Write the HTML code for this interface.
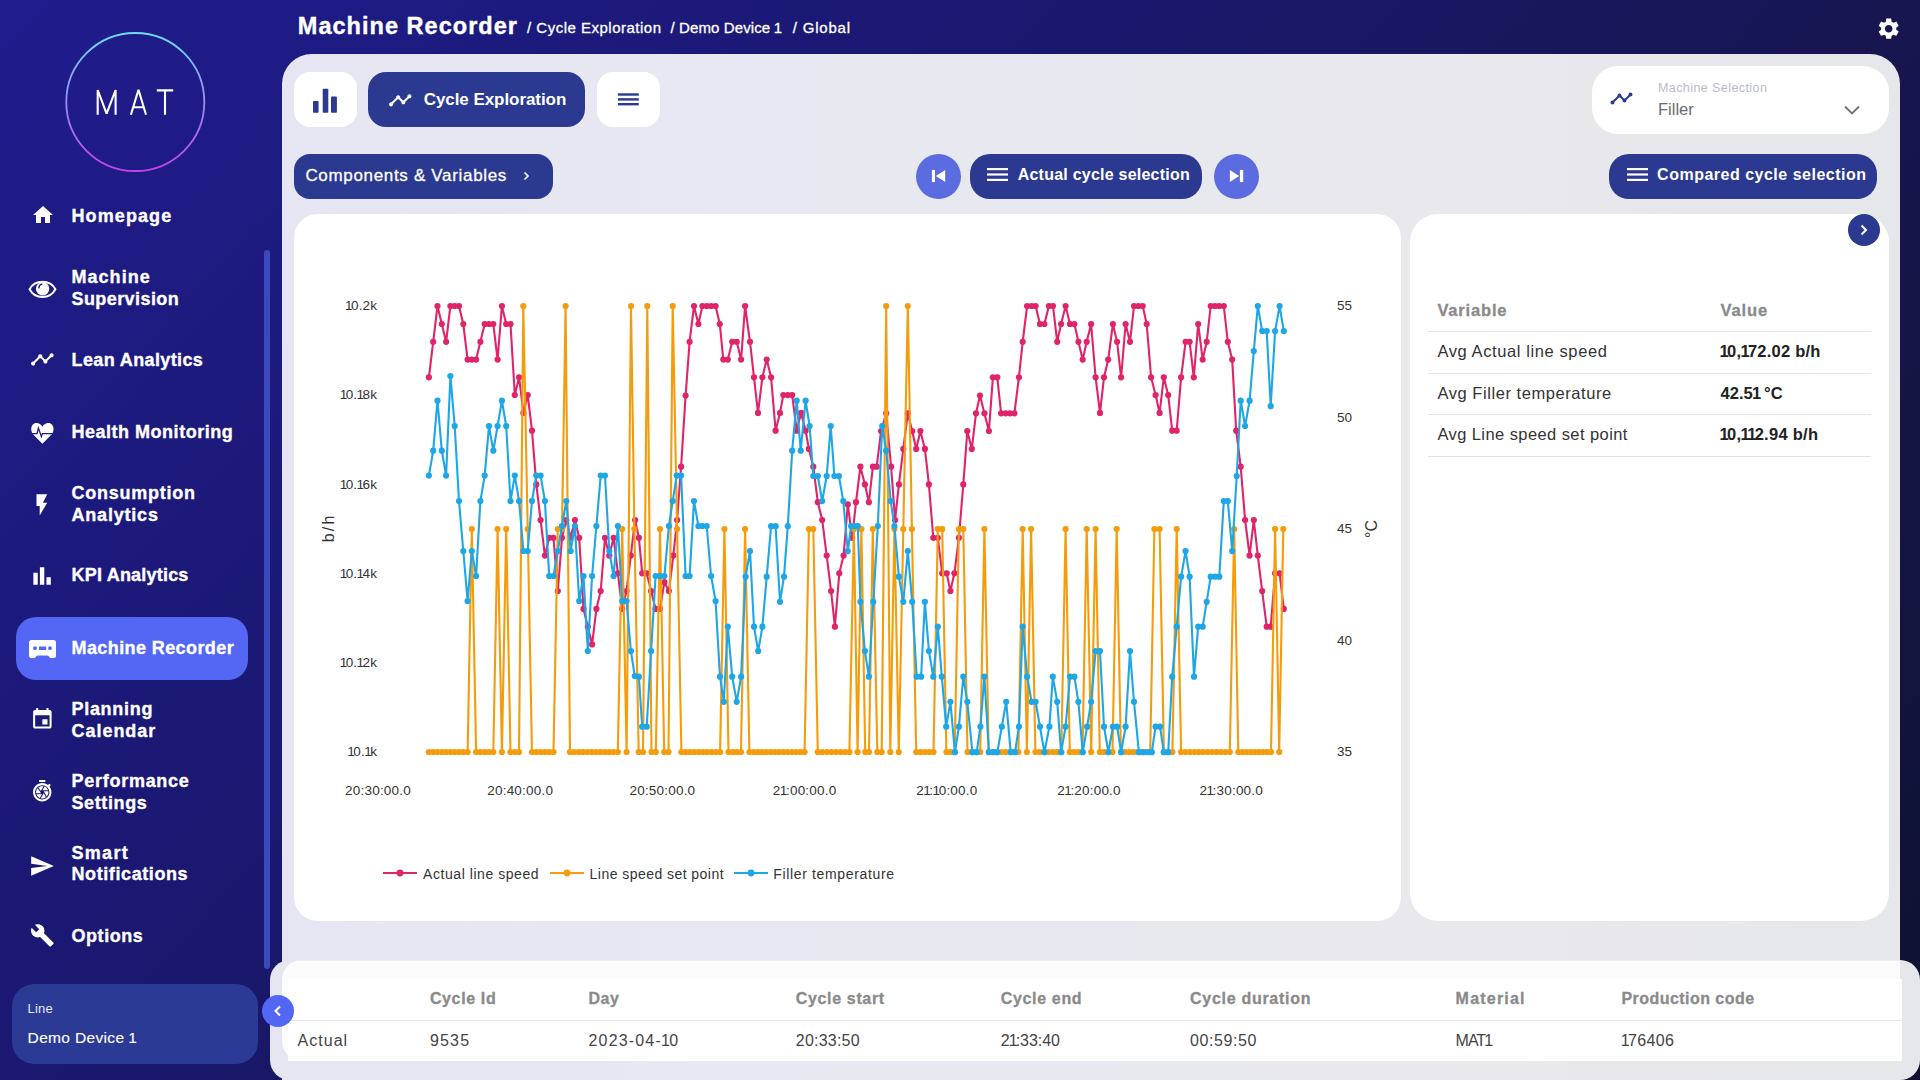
<!DOCTYPE html>
<html><head><meta charset="utf-8"><title>Machine Recorder</title>
<style>
html,body{margin:0;padding:0;}
body{width:1920px;height:1080px;overflow:hidden;position:relative;font-family:"Liberation Sans", sans-serif;
background:linear-gradient(133deg,#201c8e 0%,#1a1870 35%,#171650 66%,#0e1230 100%);}
.t{position:absolute;white-space:nowrap;font-family:"Liberation Sans", sans-serif;}
svg{overflow:visible}
</style></head><body>
<svg style="position:absolute;left:65px;top:32px;" width="140" height="140" viewBox="0 0 140 140"><defs><linearGradient id="lg" x1="0" y1="0" x2="0" y2="1">
<stop offset="0" stop-color="#6fdcf8"/><stop offset="0.5" stop-color="#9c8ef4"/><stop offset="1" stop-color="#c63ff0"/></linearGradient></defs>
<circle cx="70.3" cy="70" r="69" fill="none" stroke="url(#lg)" stroke-width="1.8"/>
<g fill="none" stroke="#fff" stroke-width="2.1" stroke-linejoin="bevel">
<path d="M32.7,82.8 V58 L41.6,81.6 L50.6,58 V82.8"/>
<path d="M65.9,82.8 L73.5,57.8 L81,82.8 M68.3,75.3 H78.6"/>
<path d="M91.8,58.4 H108.2 M100,58.4 V82.8"/>
</g></svg>
<div style="position:absolute;left:16px;top:617px;width:232px;height:63px;background:#5467f4;border-radius:20px;"></div>
<div class="t" style="left:71.5px;top:207.20px;font-size:18px;line-height:18px;color:#fff;font-weight:700;letter-spacing:1.1px;-webkit-text-stroke:0.35px #fff">Homepage</div>
<div class="t" style="left:71.5px;top:267.50px;font-size:18px;line-height:18px;color:#fff;font-weight:700;letter-spacing:1.033px;-webkit-text-stroke:0.35px #fff">Machine</div>
<div class="t" style="left:71.5px;top:289.50px;font-size:18px;line-height:18px;color:#fff;font-weight:700;letter-spacing:0.42px;-webkit-text-stroke:0.35px #fff">Supervision</div>
<div class="t" style="left:71.5px;top:350.80px;font-size:18px;line-height:18px;color:#fff;font-weight:700;letter-spacing:0.385px;-webkit-text-stroke:0.35px #fff">Lean Analytics</div>
<div class="t" style="left:71.5px;top:422.60px;font-size:18px;line-height:18px;color:#fff;font-weight:700;letter-spacing:0.512px;-webkit-text-stroke:0.35px #fff">Health Monitoring</div>
<div class="t" style="left:71.5px;top:483.50px;font-size:18px;line-height:18px;color:#fff;font-weight:700;letter-spacing:0.76px;-webkit-text-stroke:0.35px #fff">Consumption</div>
<div class="t" style="left:71.5px;top:505.50px;font-size:18px;line-height:18px;color:#fff;font-weight:700;letter-spacing:0.8px;-webkit-text-stroke:0.35px #fff">Analytics</div>
<div class="t" style="left:71.5px;top:566.40px;font-size:18px;line-height:18px;color:#fff;font-weight:700;letter-spacing:0.208px;-webkit-text-stroke:0.35px #fff">KPI Analytics</div>
<div class="t" style="left:71.5px;top:638.70px;font-size:18px;line-height:18px;color:#fff;font-weight:700;letter-spacing:0.407px;-webkit-text-stroke:0.35px #fff">Machine Recorder</div>
<div class="t" style="left:71.5px;top:699.70px;font-size:18px;line-height:18px;color:#fff;font-weight:700;letter-spacing:0.7px;-webkit-text-stroke:0.35px #fff">Planning</div>
<div class="t" style="left:71.5px;top:721.50px;font-size:18px;line-height:18px;color:#fff;font-weight:700;letter-spacing:0.971px;-webkit-text-stroke:0.35px #fff">Calendar</div>
<div class="t" style="left:71.5px;top:771.60px;font-size:18px;line-height:18px;color:#fff;font-weight:700;letter-spacing:0.73px;-webkit-text-stroke:0.35px #fff">Performance</div>
<div class="t" style="left:71.5px;top:793.60px;font-size:18px;line-height:18px;color:#fff;font-weight:700;letter-spacing:0.614px;-webkit-text-stroke:0.35px #fff">Settings</div>
<div class="t" style="left:71.5px;top:843.60px;font-size:18px;line-height:18px;color:#fff;font-weight:700;letter-spacing:1.3px;-webkit-text-stroke:0.35px #fff">Smart</div>
<div class="t" style="left:71.5px;top:865.30px;font-size:18px;line-height:18px;color:#fff;font-weight:700;letter-spacing:0.592px;-webkit-text-stroke:0.35px #fff">Notifications</div>
<div class="t" style="left:71.5px;top:926.70px;font-size:18px;line-height:18px;color:#fff;font-weight:700;letter-spacing:0.55px;-webkit-text-stroke:0.35px #fff">Options</div>
<svg style="position:absolute;left:30.6px;top:203.2px;" width="24" height="24" viewBox="0 0 24 24"><path fill="#fff" d="M10 20v-6h4v6h5v-8h3L12 3 2 12h3v8z"/></svg>
<svg style="position:absolute;left:28px;top:279px;" width="29" height="21" viewBox="0 0 29 21"><path d="M1.6,10.2 C5,3.6 9.5,2.7 14.5,2.7 C19.5,2.7 24,3.6 27.4,10.2 C24,16.8 19.5,18 14.5,18 C9.5,18 5,16.8 1.6,10.2 Z" fill="none" stroke="#fff" stroke-width="2"/>
<circle cx="14.6" cy="9.8" r="6.7" fill="#fff"/><path d="M10.9,8.9 C10.9,6.9 12.1,5.6 13.9,5.2" fill="none" stroke="#1e1b8a" stroke-width="1.3" stroke-linecap="round"/></svg>
<svg style="position:absolute;left:30.3px;top:346.8px;" width="24.7" height="24.7" viewBox="0 0 24 24"><path fill="#fff" d="M23 8c0 1.1-.9 2-2 2-.18 0-.35-.02-.51-.07l-3.56 3.55c.05.16.07.34.07.52 0 1.1-.9 2-2 2s-2-.9-2-2c0-.18.02-.36.07-.52l-2.55-2.55c-.16.05-.34.07-.52.07s-.36-.02-.52-.07l-4.55 4.56c.05.16.07.33.07.51 0 1.1-.9 2-2 2s-2-.9-2-2 .9-2 2-2c.18 0 .35.02.51.07l4.56-4.55C8.02 9.36 8 9.18 8 9c0-1.1.9-2 2-2s2 .9 2 2c0 .18-.02.36-.07.52l2.55 2.55c.16-.05.34-.07.52-.07s.36.02.52.07l3.55-3.56C19.02 8.35 19 8.18 19 8c0-1.1.9-2 2-2s2 .9 2 2z"/></svg>
<svg style="position:absolute;left:31px;top:422px;" width="24" height="23" viewBox="0 0 24 23"><path fill="#fff" d="M11.4,4.7 C9.8,1.6 6.9,0.6 4.6,1.1 C1.6,1.8 0,4.6 0.3,7.8 C0.45,9.6 1.1,11 1.7,11.9 L11.4,21.8 L21.1,11.9 C21.7,11 22.35,9.6 22.5,7.8 C22.8,4.6 21.2,1.8 18.2,1.1 C15.9,0.6 13,1.6 11.4,4.7 Z"/>
<path fill="none" stroke="#1e1b86" stroke-width="1.25" stroke-linejoin="miter" d="M-1,11.6 H6 L7.4,6 L10.4,14.6 L11.4,11.6 H24"/></svg>
<svg style="position:absolute;left:29.3px;top:491.7px;" width="25.7" height="25.7" viewBox="0 0 24 24"><path fill="#fff" d="M7 2v11h3v9l7-12h-4l4-8z"/></svg>
<svg style="position:absolute;left:29.1px;top:562.9px;" width="26.2" height="26.2" viewBox="0 0 24 24"><path fill="#fff" d="M4 9h4v11H4zm12 4h4v7h-4zm-6-9h4v16h-4z"/></svg>
<svg style="position:absolute;left:29px;top:640px;" width="27" height="18" viewBox="0 0 27 18"><path fill="#fff" fill-rule="evenodd" d="M2.5,0 H24.5 Q27,0 27,2.5 V15.5 Q27,18 24.5,18 H22 Q20.6,18 20,16.5 Q19.5,15.4 18,15.4 H9 Q7.5,15.4 7,16.5 Q6.4,18 5,18 H2.5 Q0,18 0,15.5 V2.5 Q0,0 2.5,0 Z
M6,6.3 A1.9,1.9 0 1 0 6,10.1 A1.9,1.9 0 1 0 6,6.3 Z M10,6.5 H17.2 V10 H10 Z M21,6.3 A1.9,1.9 0 1 0 21,10.1 A1.9,1.9 0 1 0 21,6.3 Z"/></svg>
<svg style="position:absolute;left:30px;top:706.8px;" width="24.7" height="24.7" viewBox="0 0 24 24"><path fill="#fff" d="M17 12h-5v5h5v-5zM16 1v2H8V1H6v2H5c-1.11 0-1.99.9-1.99 2L3 19c0 1.1.89 2 2 2h14c1.1 0 2-.9 2-2V5c0-1.1-.9-2-2-2h-1V1h-2zm3 18H5V8h14v11z"/></svg>
<svg style="position:absolute;left:30px;top:778.8px;" width="24.5" height="24.5" viewBox="0 0 24 24"><path fill="#fff" d="M15 1H9v2h6V1zm4.03 6.39l1.42-1.42c-.43-.51-.9-.99-1.41-1.41l-1.42 1.42C16.07 4.74 14.12 4 12 4c-4.97 0-9 4.03-9 9s4.02 9 9 9 9-4.03 9-9c0-2.12-.74-4.07-1.97-5.61zM12 20c-3.87 0-7-3.130-7-7s3.13-7 7-7 7 3.13 7 7-3.13 7-7 7zm-.32-5H6.35c.57 1.62 1.82 2.92 3.41 3.56l-.11-.06 2.03-3.5zm5.97-4c-.57-1.6-1.78-2.89-3.34-3.54L12.26 11h5.39zm-7.04 7.83c.45.11.91.17 1.39.17 1.34 0 2.57-.45 3.57-1.19l-2.11-3.9-2.85 4.920zM7.55 8.99C6.59 10.05 6 11.46 6 13c0 .34.04.67.09 1h4.72L7.55 8.99zm8.79 8.14C17.37 16.06 18 14.6 18 13c0-.34-.04-.67-.09-1h-4.34l2.77 5.13zm-3.01-9.98C12.9 7.060 12.46 7 12 7c-1.4 0-2.69.49-3.71 1.29l2.32 3.56 2.72-4.7z"/></svg>
<svg style="position:absolute;left:28.7px;top:852.5px;" width="25.9" height="25.9" viewBox="0 0 24 24"><path fill="#fff" d="M2.01 21L23 12 2.01 3 2 10l15 2-15 2z"/></svg>
<svg style="position:absolute;left:30.2px;top:922.6px;" width="24.7" height="24.7" viewBox="0 0 24 24"><path fill="#fff" d="M22.7 19l-9.1-9.1c.9-2.3.4-5-1.5-6.9-2-2-5-2.4-7.4-1.3L9 6 6 9 1.6 4.7C.4 7.1.9 10.1 2.9 12.1c1.9 1.9 4.6 2.4 6.9 1.5l9.1 9.1c.4.4 1 .4 1.4 0l2.3-2.3c.5-.4.5-1.1.1-1.4z"/></svg>
<div style="position:absolute;left:264px;top:250px;width:6px;height:719px;background:#3b49bd;border-radius:3px;"></div>
<div style="position:absolute;left:12px;top:984px;width:246px;height:80px;background:#2b3a95;border-radius:22px;"></div>
<div class="t" style="left:27.6px;top:1002.25px;font-size:13px;line-height:13px;color:#e6e8f5;font-weight:400;letter-spacing:0.2px;">Line</div>
<div class="t" style="left:27.6px;top:1029.83px;font-size:15.5px;line-height:15.5px;color:#fff;font-weight:400;letter-spacing:0.342px;-webkit-text-stroke:0.12px #fff">Demo Device <span style="margin-left:-0.78px;margin-right:-1.86px">1</span></div>
<div class="t" style="left:297.8px;top:15.23px;font-size:23.5px;line-height:23.5px;color:#fff;font-weight:700;letter-spacing:1.027px;-webkit-text-stroke:0.4px #fff">Machine Recorder</div>
<div class="t" style="left:527.0px;top:20.25px;font-size:15px;line-height:15px;color:#fff;font-weight:400;letter-spacing:0.5px;-webkit-text-stroke:0.3px #fff">/ Cycle Exploration</div>
<div class="t" style="left:670.5px;top:20.25px;font-size:15px;line-height:15px;color:#fff;font-weight:400;letter-spacing:0.107px;-webkit-text-stroke:0.3px #fff">/ Demo Device <span style="margin-left:-0.75px;margin-right:-1.8px">1</span></div>
<div class="t" style="left:792.7px;top:20.25px;font-size:15px;line-height:15px;color:#fff;font-weight:400;letter-spacing:0.814px;-webkit-text-stroke:0.3px #fff">/ Global</div>
<svg style="position:absolute;left:1875.6px;top:16.4px;" width="25.4" height="25.4" viewBox="0 0 24 24"><path fill="#fff" d="M19.14 12.94c.04-.3.06-.61.06-.94 0-.32-.02-.64-.07-.94l2.03-1.58c.18-.14.23-.41.12-.61l-1.92-3.32c-.12-.22-.37-.29-.59-.22l-2.39.96c-.5-.38-1.03-.7-1.62-.94l-.36-2.54c-.04-.24-.24-.41-.48-.41h-3.84c-.24 0-.43.17-.47.41l-.36 2.54c-.59.24-1.13.57-1.62.94l-2.39-.96c-.22-.08-.47 0-.59.22L2.74 8.87c-.12.21-.08.47.12.61l2.03 1.58c-.05.3-.09.63-.09.94s.02.64.07.94l-2.03 1.58c-.18.14-.23.41-.12.61l1.92 3.32c.12.22.37.29.59.22l2.39-.96c.5.38 1.03.7 1.62.94l.36 2.54c.05.24.24.41.48.41h3.84c.24 0 .44-.17.47-.41l.36-2.54c.59-.24 1.13-.56 1.62-.94l2.39.96c.22.08.47 0 .59-.22l1.92-3.32c.12-.22.07-.47-.12-.61l-2.01-1.58zM12 15.6c-1.98 0-3.6-1.62-3.6-3.6s1.62-3.6 3.6-3.6 3.6 1.62 3.6 3.6-1.62 3.6-3.6 3.6z"/></svg>
<div style="position:absolute;left:282px;top:54px;width:1618px;height:1040px;background:linear-gradient(90deg,#e6e6f2 0%,#e8e8f2 28%,#e8e8ed 76%,#e6e7ea 100%);border-radius:30px 30px 0 0;"></div>
<div style="position:absolute;left:294px;top:72px;width:63px;height:55px;background:#fff;border-radius:16px;"></div>
<svg style="position:absolute;left:312px;top:88px;" width="26" height="26" viewBox="0 0 26 26"><g fill="#2b3991"><rect x="1" y="13" width="5.6" height="11.7" rx="0.8"/><rect x="10.7" y="0.8" width="5.6" height="23.9" rx="0.8"/><rect x="19" y="8.5" width="5.9" height="16.2" rx="0.8"/></g></svg>
<div style="position:absolute;left:368px;top:72px;width:217px;height:55px;background:#2b3991;border-radius:18px;"></div>
<svg style="position:absolute;left:387.5px;top:87.5px;" width="24.5" height="24.5" viewBox="0 0 24 24"><path fill="#fff" d="M23 8c0 1.1-.9 2-2 2-.18 0-.35-.02-.51-.07l-3.56 3.55c.05.16.07.34.07.52 0 1.1-.9 2-2 2s-2-.9-2-2c0-.18.02-.36.07-.52l-2.55-2.55c-.16.05-.34.07-.52.07s-.36-.02-.52-.07l-4.55 4.56c.05.16.07.33.07.51 0 1.1-.9 2-2 2s-2-.9-2-2 .9-2 2-2c.18 0 .35.02.51.07l4.56-4.55C8.02 9.36 8 9.18 8 9c0-1.1.9-2 2-2s2 .9 2 2c0 .18-.02.36-.07.52l2.55 2.55c.16-.05.34-.07.52-.07s.36.02.52.07l3.55-3.56C19.02 8.35 19 8.18 19 8c0-1.1.9-2 2-2s2 .9 2 2z"/></svg>
<div class="t" style="left:423.7px;top:90.75px;font-size:17px;line-height:17px;color:#fff;font-weight:700;letter-spacing:-0.062px;">Cycle Exploration</div>
<div style="position:absolute;left:597px;top:72px;width:63px;height:55px;background:#fff;border-radius:16px;"></div>
<svg style="position:absolute;left:617px;top:92px;" width="23" height="15" viewBox="0 0 23 15"><g fill="#2b3991"><rect x="0.9" y="1.3" width="20.9" height="2.4"/><rect x="0.9" y="6.2" width="20.9" height="2.4"/><rect x="0.9" y="11" width="20.9" height="2.4"/></g></svg>
<div style="position:absolute;left:294px;top:154px;width:259px;height:45px;background:#2b3991;border-radius:16px;"></div>
<div class="t" style="left:305.4px;top:166.85px;font-size:17px;line-height:17px;color:#fff;font-weight:400;letter-spacing:0.676px;-webkit-text-stroke:0.3px #fff">Components &amp; Variables</div>
<svg style="position:absolute;left:519px;top:168px;" width="16" height="16" viewBox="0 0 16 16"><path d="M5.5,4.5 L9,8 L5.5,11.5" fill="none" stroke="#fff" stroke-width="1.6"/></svg>
<div style="position:absolute;left:916.0px;top:154.0px;width:45.0px;height:45.0px;background:#5b6be0;border-radius:50%;"></div>
<svg style="position:absolute;left:930px;top:168px;" width="17" height="16" viewBox="0 0 17 16"><g fill="#fff"><rect x="1.9" y="1.9" width="3.1" height="12.2"/><path d="M5.7,8 L15.2,1.9 V14.1 Z"/></g></svg>
<div style="position:absolute;left:970px;top:154px;width:232px;height:45px;background:#2b3991;border-radius:20px;"></div>
<svg style="position:absolute;left:986px;top:166px;" width="23" height="17" viewBox="0 0 23 17"><g fill="#fff"><rect x="1" y="2" width="21" height="2.2"/><rect x="1" y="7.4" width="21" height="2.2"/><rect x="1" y="12.8" width="21" height="2.2"/></g></svg>
<div class="t" style="left:1017.7px;top:166.80px;font-size:16px;line-height:16px;color:#fff;font-weight:700;letter-spacing:0.233px;">Actual cycle selection</div>
<div style="position:absolute;left:1214.0px;top:154.0px;width:45.0px;height:45.0px;background:#5b6be0;border-radius:50%;"></div>
<svg style="position:absolute;left:1228px;top:168px;" width="17" height="16" viewBox="0 0 17 16"><g fill="#fff"><rect x="11.9" y="1.9" width="3.3" height="12.2"/><path d="M1.9,1.9 L11.1,8 L1.9,14.1 Z"/></g></svg>
<div style="position:absolute;left:1609px;top:154px;width:268px;height:45px;background:#2b3991;border-radius:20px;"></div>
<svg style="position:absolute;left:1626px;top:166px;" width="23" height="17" viewBox="0 0 23 17"><g fill="#fff"><rect x="1" y="2" width="21" height="2.2"/><rect x="1" y="7.4" width="21" height="2.2"/><rect x="1" y="12.8" width="21" height="2.2"/></g></svg>
<div class="t" style="left:1657.1px;top:166.90px;font-size:16px;line-height:16px;color:#fff;font-weight:700;letter-spacing:0.5px;">Compared cycle selection</div>
<div style="position:absolute;left:1592px;top:66px;width:297px;height:68px;background:#fff;border-radius:26px;"></div>
<svg style="position:absolute;left:1609px;top:85px;" width="25" height="25" viewBox="0 0 25 25"><path fill="#2b3991" d="M23 8c0 1.1-.9 2-2 2-.18 0-.35-.02-.51-.07l-3.56 3.55c.05.16.07.34.07.52 0 1.1-.9 2-2 2s-2-.9-2-2c0-.18.02-.36.07-.52l-2.55-2.55c-.16.05-.34.07-.52.07s-.36-.02-.52-.07l-4.55 4.56c.05.16.07.33.07.51 0 1.1-.9 2-2 2s-2-.9-2-2 .9-2 2-2c.18 0 .35.02.51.07l4.56-4.55C8.02 9.36 8 9.18 8 9c0-1.1.9-2 2-2s2 .9 2 2c0 .18-.02.36-.07.52l2.55 2.55c.16-.05.34-.07.52-.07s.36.02.52.07l3.55-3.56C19.02 8.35 19 8.18 19 8c0-1.1.9-2 2-2s2 .9 2 2z" transform="translate(0.5,1.5)"/></svg>
<div class="t" style="left:1658.0px;top:82.17px;font-size:12.5px;line-height:12.5px;color:#b9bcc6;font-weight:400;letter-spacing:0.419px;">Machine Selection</div>
<div class="t" style="left:1658.0px;top:101.07px;font-size:16.5px;line-height:16.5px;color:#686b76;font-weight:400;letter-spacing:0.0px;">Filler</div>
<svg style="position:absolute;left:1842px;top:102px;" width="20" height="16" viewBox="0 0 20 16"><path d="M3,4.5 L10,11.5 L17,4.5" fill="none" stroke="#6e7279" stroke-width="1.9"/></svg>
<div style="position:absolute;left:294px;top:214px;width:1107px;height:707px;background:#fff;border-radius:24px;"></div>
<div style="position:absolute;left:1410px;top:214px;width:479px;height:707px;background:#fff;border-radius:28px;"></div>
<div style="position:absolute;left:1848px;top:214px;width:32px;height:32px;background:#2b3991;border-radius:50%;"></div>
<svg style="position:absolute;left:1856px;top:222px;" width="16" height="16" viewBox="0 0 16 16"><path d="M5.5,3.5 L10,8 L5.5,12.5" fill="none" stroke="#fff" stroke-width="2"/></svg>
<div class="t" style="left:1437.4px;top:302.28px;font-size:16.5px;line-height:16.5px;color:#8a8a8a;font-weight:700;letter-spacing:0.829px;-webkit-text-stroke:0.3px #8a8a8a">Variable</div>
<div class="t" style="left:1720.4px;top:302.28px;font-size:16.5px;line-height:16.5px;color:#8a8a8a;font-weight:700;letter-spacing:0.9px;-webkit-text-stroke:0.3px #8a8a8a">Value</div>
<div style="position:absolute;left:1428px;top:331px;width:443px;height:1px;background:#e4e4e8;border-radius:0;"></div>
<div style="position:absolute;left:1428px;top:373px;width:443px;height:1px;background:#e4e4e8;border-radius:0;"></div>
<div style="position:absolute;left:1428px;top:414px;width:443px;height:1px;background:#e4e4e8;border-radius:0;"></div>
<div style="position:absolute;left:1428px;top:456px;width:443px;height:1px;background:#e4e4e8;border-radius:0;"></div>
<div class="t" style="left:1437.4px;top:342.98px;font-size:16.5px;line-height:16.5px;color:#333;font-weight:400;letter-spacing:0.6px;">Avg Actual line speed</div>
<div class="t" style="left:1720.4px;top:342.98px;font-size:16.5px;line-height:16.5px;color:#222;font-weight:700;letter-spacing:0.242px;"><span style="margin-left:-0.83px;margin-right:-1.98px">1</span>0,<span style="margin-left:-0.83px;margin-right:-1.98px">1</span>72.02 b/h</div>
<div class="t" style="left:1437.4px;top:385.48px;font-size:16.5px;line-height:16.5px;color:#333;font-weight:400;letter-spacing:0.562px;">Avg Filler temperature</div>
<div class="t" style="left:1720.4px;top:385.48px;font-size:16.5px;line-height:16.5px;color:#222;font-weight:700;letter-spacing:0.086px;">42.5<span style="margin-left:-0.83px;margin-right:-1.98px">1</span> °C</div>
<div class="t" style="left:1437.4px;top:426.28px;font-size:16.5px;line-height:16.5px;color:#333;font-weight:400;letter-spacing:0.417px;">Avg Line speed set point</div>
<div class="t" style="left:1720.4px;top:426.28px;font-size:16.5px;line-height:16.5px;color:#222;font-weight:700;letter-spacing:0.267px;"><span style="margin-left:-0.83px;margin-right:-1.98px">1</span>0,<span style="margin-left:-0.83px;margin-right:-1.98px">1</span><span style="margin-left:-0.83px;margin-right:-1.98px">1</span>2.94 b/h</div>
<div class="t" style="right:1543.0px;text-align:right;top:299.22px;font-size:13.5px;line-height:13.5px;color:#333;font-weight:400;letter-spacing:0.1px;"><span style="margin-left:-0.68px;margin-right:-1.62px">1</span>0.2k</div>
<div class="t" style="right:1543.0px;text-align:right;top:388.42px;font-size:13.5px;line-height:13.5px;color:#333;font-weight:400;letter-spacing:0.1px;"><span style="margin-left:-0.68px;margin-right:-1.62px">1</span>0.<span style="margin-left:-0.68px;margin-right:-1.62px">1</span>8k</div>
<div class="t" style="right:1543.0px;text-align:right;top:477.62px;font-size:13.5px;line-height:13.5px;color:#333;font-weight:400;letter-spacing:0.1px;"><span style="margin-left:-0.68px;margin-right:-1.62px">1</span>0.<span style="margin-left:-0.68px;margin-right:-1.62px">1</span>6k</div>
<div class="t" style="right:1543.0px;text-align:right;top:566.83px;font-size:13.5px;line-height:13.5px;color:#333;font-weight:400;letter-spacing:0.1px;"><span style="margin-left:-0.68px;margin-right:-1.62px">1</span>0.<span style="margin-left:-0.68px;margin-right:-1.62px">1</span>4k</div>
<div class="t" style="right:1543.0px;text-align:right;top:656.02px;font-size:13.5px;line-height:13.5px;color:#333;font-weight:400;letter-spacing:0.1px;"><span style="margin-left:-0.68px;margin-right:-1.62px">1</span>0.<span style="margin-left:-0.68px;margin-right:-1.62px">1</span>2k</div>
<div class="t" style="right:1543.0px;text-align:right;top:745.23px;font-size:13.5px;line-height:13.5px;color:#333;font-weight:400;letter-spacing:0.1px;"><span style="margin-left:-0.68px;margin-right:-1.62px">1</span>0.<span style="margin-left:-0.68px;margin-right:-1.62px">1</span>k</div>
<div class="t" style="left:1337.0px;top:299.22px;font-size:13.5px;line-height:13.5px;color:#333;font-weight:400;letter-spacing:0px;">55</div>
<div class="t" style="left:1337.0px;top:410.72px;font-size:13.5px;line-height:13.5px;color:#333;font-weight:400;letter-spacing:0px;">50</div>
<div class="t" style="left:1337.0px;top:522.23px;font-size:13.5px;line-height:13.5px;color:#333;font-weight:400;letter-spacing:0px;">45</div>
<div class="t" style="left:1337.0px;top:633.73px;font-size:13.5px;line-height:13.5px;color:#333;font-weight:400;letter-spacing:0px;">40</div>
<div class="t" style="left:1337.0px;top:745.23px;font-size:13.5px;line-height:13.5px;color:#333;font-weight:400;letter-spacing:0px;">35</div>
<div class="t" style="left:78.0px;width:600px;text-align:center;top:784.12px;font-size:13.5px;line-height:13.5px;color:#333;font-weight:400;letter-spacing:0.2px;">20:30:00.0</div>
<div class="t" style="left:220.2px;width:600px;text-align:center;top:784.12px;font-size:13.5px;line-height:13.5px;color:#333;font-weight:400;letter-spacing:0.2px;">20:40:00.0</div>
<div class="t" style="left:362.4px;width:600px;text-align:center;top:784.12px;font-size:13.5px;line-height:13.5px;color:#333;font-weight:400;letter-spacing:0.2px;">20:50:00.0</div>
<div class="t" style="left:504.6px;width:600px;text-align:center;top:784.12px;font-size:13.5px;line-height:13.5px;color:#333;font-weight:400;letter-spacing:0.2px;">2<span style="margin-left:-0.68px;margin-right:-1.62px">1</span>:00:00.0</div>
<div class="t" style="left:646.8px;width:600px;text-align:center;top:784.12px;font-size:13.5px;line-height:13.5px;color:#333;font-weight:400;letter-spacing:0.2px;">2<span style="margin-left:-0.68px;margin-right:-1.62px">1</span>:<span style="margin-left:-0.68px;margin-right:-1.62px">1</span>0:00.0</div>
<div class="t" style="left:789.0px;width:600px;text-align:center;top:784.12px;font-size:13.5px;line-height:13.5px;color:#333;font-weight:400;letter-spacing:0.2px;">2<span style="margin-left:-0.68px;margin-right:-1.62px">1</span>:20:00.0</div>
<div class="t" style="left:931.2px;width:600px;text-align:center;top:784.12px;font-size:13.5px;line-height:13.5px;color:#333;font-weight:400;letter-spacing:0.2px;">2<span style="margin-left:-0.68px;margin-right:-1.62px">1</span>:30:00.0</div>
<div class="t" style="left:301px;top:519px;width:56px;text-align:center;font-size:16px;line-height:20px;color:#333;letter-spacing:2.2px;text-indent:2.2px;transform:rotate(-90deg)">b/h</div>
<div class="t" style="left:1343.5px;top:519px;width:56px;text-align:center;font-size:16px;line-height:20px;color:#333;transform:rotate(-90deg)">°C</div>
<svg style="position:absolute;left:0px;top:0px;pointer-events:none" width="1920" height="1080" viewBox="0 0 1920 1080"><path d="M428.9,377.3 L433.2,341.8 L437.5,306.0 L441.8,324.0 L446.1,341.8 L450.4,306.0 L454.7,306.0 L459.0,306.0 L463.3,324.0 L467.6,359.6 L471.8,359.6 L476.1,359.6 L480.4,341.8 L484.7,324.0 L489.0,324.0 L493.3,324.0 L497.6,359.6 L501.9,306.0 L506.2,324.0 L510.5,324.0 L514.8,395.0 L519.1,377.3 L523.4,412.9 L527.7,395.0 L532.0,430.7 L536.3,484.4 L540.6,520.0 L544.9,555.6 L549.2,537.8 L553.5,537.8 L557.8,591.0 L562.0,537.8 L566.3,520.0 L570.6,537.8 L574.9,520.0 L579.2,537.8 L583.5,608.9 L587.8,626.7 L592.1,644.4 L596.4,608.9 L600.7,591.0 L605.0,537.8 L609.3,555.6 L613.6,537.8 L617.9,573.3 L622.2,608.9 L626.5,591.0 L630.8,555.6 L635.1,520.0 L638.9,537.8 L642.2,573.3 L646.7,573.3 L651.1,591.1 L655.6,608.9 L660.0,608.9 L664.4,582.2 L668.9,591.1 L673.3,555.6 L677.1,520.0 L681.1,466.7 L685.6,395.6 L689.6,341.8 L694.0,306.0 L698.4,324.0 L702.4,306.0 L706.7,306.0 L711.1,306.0 L715.6,306.0 L719.8,324.0 L723.3,359.6 L727.8,359.6 L732.2,341.8 L736.7,341.8 L741.1,359.6 L745.1,306.0 L750.0,341.8 L754.0,377.3 L758.0,412.9 L762.4,377.3 L766.7,359.6 L771.1,377.3 L775.6,430.7 L780.0,412.9 L783.3,395.1 L787.8,395.1 L792.2,395.1 L796.7,430.7 L801.1,412.9 L805.6,430.7 L808.9,448.9 L813.3,466.7 L817.8,502.2 L822.2,520.0 L826.7,555.6 L831.1,591.1 L834.9,626.7 L839.3,573.3 L843.6,555.6 L847.8,504.4 L852.2,537.8 L856.0,502.2 L860.4,466.7 L864.9,484.4 L868.9,502.2 L872.9,466.7 L876.7,466.7 L881.1,431.1 L886.2,413.3 L891.1,466.7 L895.1,520.0 L898.9,484.4 L903.3,448.9 L907.8,413.3 L912.2,431.1 L916.2,448.9 L920.4,431.1 L924.9,448.9 L928.9,484.4 L933.3,537.8 L937.8,537.8 L942.2,573.3 L946.7,573.3 L950.4,591.1 L954.4,573.3 L958.9,537.8 L963.3,484.4 L967.3,431.1 L971.8,448.9 L976.0,413.3 L980.0,395.6 L984.4,413.3 L988.9,431.1 L992.9,377.3 L997.3,377.3 L1001.1,413.3 L1005.6,413.3 L1010.0,413.3 L1014.4,413.3 L1018.9,377.3 L1022.7,341.8 L1027.1,306.0 L1031.6,306.0 L1035.6,306.0 L1040.0,324.0 L1044.4,324.0 L1048.9,306.0 L1053.0,306.0 L1057.2,341.8 L1061.1,324.0 L1065.6,306.0 L1070.0,324.0 L1074.4,324.0 L1078.4,341.8 L1082.7,359.6 L1086.7,341.8 L1091.1,324.0 L1095.6,377.3 L1100.0,412.9 L1104.0,377.3 L1108.2,359.6 L1112.9,324.0 L1117.1,341.8 L1121.1,377.3 L1125.6,324.0 L1130.0,341.8 L1134.0,306.0 L1138.4,306.0 L1142.7,306.0 L1146.7,324.0 L1151.1,377.3 L1155.6,395.1 L1159.6,412.9 L1163.8,377.3 L1168.2,395.1 L1172.2,430.7 L1176.7,430.7 L1181.1,377.3 L1185.6,341.8 L1189.6,341.8 L1193.8,377.3 L1198.2,324.0 L1202.7,359.6 L1206.7,341.8 L1210.7,306.0 L1215.1,306.0 L1219.3,306.0 L1223.8,306.0 L1227.8,341.8 L1232.2,359.6 L1236.2,430.7 L1240.7,466.7 L1245.1,520.0 L1249.6,555.6 L1253.8,520.0 L1257.8,555.6 L1262.2,591.1 L1266.7,626.7 L1270.7,626.7 L1275.1,573.3 L1279.6,573.3 L1283.8,608.9" fill="none" stroke="#e0246a" stroke-width="2.1" stroke-linejoin="round"/><g fill="#e0246a"><circle cx="428.9" cy="377.3" r="3.1"/><circle cx="433.2" cy="341.8" r="3.1"/><circle cx="437.5" cy="306.0" r="3.1"/><circle cx="441.8" cy="324.0" r="3.1"/><circle cx="446.1" cy="341.8" r="3.1"/><circle cx="450.4" cy="306.0" r="3.1"/><circle cx="454.7" cy="306.0" r="3.1"/><circle cx="459.0" cy="306.0" r="3.1"/><circle cx="463.3" cy="324.0" r="3.1"/><circle cx="467.6" cy="359.6" r="3.1"/><circle cx="471.8" cy="359.6" r="3.1"/><circle cx="476.1" cy="359.6" r="3.1"/><circle cx="480.4" cy="341.8" r="3.1"/><circle cx="484.7" cy="324.0" r="3.1"/><circle cx="489.0" cy="324.0" r="3.1"/><circle cx="493.3" cy="324.0" r="3.1"/><circle cx="497.6" cy="359.6" r="3.1"/><circle cx="501.9" cy="306.0" r="3.1"/><circle cx="506.2" cy="324.0" r="3.1"/><circle cx="510.5" cy="324.0" r="3.1"/><circle cx="514.8" cy="395.0" r="3.1"/><circle cx="519.1" cy="377.3" r="3.1"/><circle cx="523.4" cy="412.9" r="3.1"/><circle cx="527.7" cy="395.0" r="3.1"/><circle cx="532.0" cy="430.7" r="3.1"/><circle cx="536.3" cy="484.4" r="3.1"/><circle cx="540.6" cy="520.0" r="3.1"/><circle cx="544.9" cy="555.6" r="3.1"/><circle cx="549.2" cy="537.8" r="3.1"/><circle cx="553.5" cy="537.8" r="3.1"/><circle cx="557.8" cy="591.0" r="3.1"/><circle cx="562.0" cy="537.8" r="3.1"/><circle cx="566.3" cy="520.0" r="3.1"/><circle cx="570.6" cy="537.8" r="3.1"/><circle cx="574.9" cy="520.0" r="3.1"/><circle cx="579.2" cy="537.8" r="3.1"/><circle cx="583.5" cy="608.9" r="3.1"/><circle cx="587.8" cy="626.7" r="3.1"/><circle cx="592.1" cy="644.4" r="3.1"/><circle cx="596.4" cy="608.9" r="3.1"/><circle cx="600.7" cy="591.0" r="3.1"/><circle cx="605.0" cy="537.8" r="3.1"/><circle cx="609.3" cy="555.6" r="3.1"/><circle cx="613.6" cy="537.8" r="3.1"/><circle cx="617.9" cy="573.3" r="3.1"/><circle cx="622.2" cy="608.9" r="3.1"/><circle cx="626.5" cy="591.0" r="3.1"/><circle cx="630.8" cy="555.6" r="3.1"/><circle cx="635.1" cy="520.0" r="3.1"/><circle cx="638.9" cy="537.8" r="3.1"/><circle cx="642.2" cy="573.3" r="3.1"/><circle cx="646.7" cy="573.3" r="3.1"/><circle cx="651.1" cy="591.1" r="3.1"/><circle cx="655.6" cy="608.9" r="3.1"/><circle cx="660.0" cy="608.9" r="3.1"/><circle cx="664.4" cy="582.2" r="3.1"/><circle cx="668.9" cy="591.1" r="3.1"/><circle cx="673.3" cy="555.6" r="3.1"/><circle cx="677.1" cy="520.0" r="3.1"/><circle cx="681.1" cy="466.7" r="3.1"/><circle cx="685.6" cy="395.6" r="3.1"/><circle cx="689.6" cy="341.8" r="3.1"/><circle cx="694.0" cy="306.0" r="3.1"/><circle cx="698.4" cy="324.0" r="3.1"/><circle cx="702.4" cy="306.0" r="3.1"/><circle cx="706.7" cy="306.0" r="3.1"/><circle cx="711.1" cy="306.0" r="3.1"/><circle cx="715.6" cy="306.0" r="3.1"/><circle cx="719.8" cy="324.0" r="3.1"/><circle cx="723.3" cy="359.6" r="3.1"/><circle cx="727.8" cy="359.6" r="3.1"/><circle cx="732.2" cy="341.8" r="3.1"/><circle cx="736.7" cy="341.8" r="3.1"/><circle cx="741.1" cy="359.6" r="3.1"/><circle cx="745.1" cy="306.0" r="3.1"/><circle cx="750.0" cy="341.8" r="3.1"/><circle cx="754.0" cy="377.3" r="3.1"/><circle cx="758.0" cy="412.9" r="3.1"/><circle cx="762.4" cy="377.3" r="3.1"/><circle cx="766.7" cy="359.6" r="3.1"/><circle cx="771.1" cy="377.3" r="3.1"/><circle cx="775.6" cy="430.7" r="3.1"/><circle cx="780.0" cy="412.9" r="3.1"/><circle cx="783.3" cy="395.1" r="3.1"/><circle cx="787.8" cy="395.1" r="3.1"/><circle cx="792.2" cy="395.1" r="3.1"/><circle cx="796.7" cy="430.7" r="3.1"/><circle cx="801.1" cy="412.9" r="3.1"/><circle cx="805.6" cy="430.7" r="3.1"/><circle cx="808.9" cy="448.9" r="3.1"/><circle cx="813.3" cy="466.7" r="3.1"/><circle cx="817.8" cy="502.2" r="3.1"/><circle cx="822.2" cy="520.0" r="3.1"/><circle cx="826.7" cy="555.6" r="3.1"/><circle cx="831.1" cy="591.1" r="3.1"/><circle cx="834.9" cy="626.7" r="3.1"/><circle cx="839.3" cy="573.3" r="3.1"/><circle cx="843.6" cy="555.6" r="3.1"/><circle cx="847.8" cy="504.4" r="3.1"/><circle cx="852.2" cy="537.8" r="3.1"/><circle cx="856.0" cy="502.2" r="3.1"/><circle cx="860.4" cy="466.7" r="3.1"/><circle cx="864.9" cy="484.4" r="3.1"/><circle cx="868.9" cy="502.2" r="3.1"/><circle cx="872.9" cy="466.7" r="3.1"/><circle cx="876.7" cy="466.7" r="3.1"/><circle cx="881.1" cy="431.1" r="3.1"/><circle cx="886.2" cy="413.3" r="3.1"/><circle cx="891.1" cy="466.7" r="3.1"/><circle cx="895.1" cy="520.0" r="3.1"/><circle cx="898.9" cy="484.4" r="3.1"/><circle cx="903.3" cy="448.9" r="3.1"/><circle cx="907.8" cy="413.3" r="3.1"/><circle cx="912.2" cy="431.1" r="3.1"/><circle cx="916.2" cy="448.9" r="3.1"/><circle cx="920.4" cy="431.1" r="3.1"/><circle cx="924.9" cy="448.9" r="3.1"/><circle cx="928.9" cy="484.4" r="3.1"/><circle cx="933.3" cy="537.8" r="3.1"/><circle cx="937.8" cy="537.8" r="3.1"/><circle cx="942.2" cy="573.3" r="3.1"/><circle cx="946.7" cy="573.3" r="3.1"/><circle cx="950.4" cy="591.1" r="3.1"/><circle cx="954.4" cy="573.3" r="3.1"/><circle cx="958.9" cy="537.8" r="3.1"/><circle cx="963.3" cy="484.4" r="3.1"/><circle cx="967.3" cy="431.1" r="3.1"/><circle cx="971.8" cy="448.9" r="3.1"/><circle cx="976.0" cy="413.3" r="3.1"/><circle cx="980.0" cy="395.6" r="3.1"/><circle cx="984.4" cy="413.3" r="3.1"/><circle cx="988.9" cy="431.1" r="3.1"/><circle cx="992.9" cy="377.3" r="3.1"/><circle cx="997.3" cy="377.3" r="3.1"/><circle cx="1001.1" cy="413.3" r="3.1"/><circle cx="1005.6" cy="413.3" r="3.1"/><circle cx="1010.0" cy="413.3" r="3.1"/><circle cx="1014.4" cy="413.3" r="3.1"/><circle cx="1018.9" cy="377.3" r="3.1"/><circle cx="1022.7" cy="341.8" r="3.1"/><circle cx="1027.1" cy="306.0" r="3.1"/><circle cx="1031.6" cy="306.0" r="3.1"/><circle cx="1035.6" cy="306.0" r="3.1"/><circle cx="1040.0" cy="324.0" r="3.1"/><circle cx="1044.4" cy="324.0" r="3.1"/><circle cx="1048.9" cy="306.0" r="3.1"/><circle cx="1053.0" cy="306.0" r="3.1"/><circle cx="1057.2" cy="341.8" r="3.1"/><circle cx="1061.1" cy="324.0" r="3.1"/><circle cx="1065.6" cy="306.0" r="3.1"/><circle cx="1070.0" cy="324.0" r="3.1"/><circle cx="1074.4" cy="324.0" r="3.1"/><circle cx="1078.4" cy="341.8" r="3.1"/><circle cx="1082.7" cy="359.6" r="3.1"/><circle cx="1086.7" cy="341.8" r="3.1"/><circle cx="1091.1" cy="324.0" r="3.1"/><circle cx="1095.6" cy="377.3" r="3.1"/><circle cx="1100.0" cy="412.9" r="3.1"/><circle cx="1104.0" cy="377.3" r="3.1"/><circle cx="1108.2" cy="359.6" r="3.1"/><circle cx="1112.9" cy="324.0" r="3.1"/><circle cx="1117.1" cy="341.8" r="3.1"/><circle cx="1121.1" cy="377.3" r="3.1"/><circle cx="1125.6" cy="324.0" r="3.1"/><circle cx="1130.0" cy="341.8" r="3.1"/><circle cx="1134.0" cy="306.0" r="3.1"/><circle cx="1138.4" cy="306.0" r="3.1"/><circle cx="1142.7" cy="306.0" r="3.1"/><circle cx="1146.7" cy="324.0" r="3.1"/><circle cx="1151.1" cy="377.3" r="3.1"/><circle cx="1155.6" cy="395.1" r="3.1"/><circle cx="1159.6" cy="412.9" r="3.1"/><circle cx="1163.8" cy="377.3" r="3.1"/><circle cx="1168.2" cy="395.1" r="3.1"/><circle cx="1172.2" cy="430.7" r="3.1"/><circle cx="1176.7" cy="430.7" r="3.1"/><circle cx="1181.1" cy="377.3" r="3.1"/><circle cx="1185.6" cy="341.8" r="3.1"/><circle cx="1189.6" cy="341.8" r="3.1"/><circle cx="1193.8" cy="377.3" r="3.1"/><circle cx="1198.2" cy="324.0" r="3.1"/><circle cx="1202.7" cy="359.6" r="3.1"/><circle cx="1206.7" cy="341.8" r="3.1"/><circle cx="1210.7" cy="306.0" r="3.1"/><circle cx="1215.1" cy="306.0" r="3.1"/><circle cx="1219.3" cy="306.0" r="3.1"/><circle cx="1223.8" cy="306.0" r="3.1"/><circle cx="1227.8" cy="341.8" r="3.1"/><circle cx="1232.2" cy="359.6" r="3.1"/><circle cx="1236.2" cy="430.7" r="3.1"/><circle cx="1240.7" cy="466.7" r="3.1"/><circle cx="1245.1" cy="520.0" r="3.1"/><circle cx="1249.6" cy="555.6" r="3.1"/><circle cx="1253.8" cy="520.0" r="3.1"/><circle cx="1257.8" cy="555.6" r="3.1"/><circle cx="1262.2" cy="591.1" r="3.1"/><circle cx="1266.7" cy="626.7" r="3.1"/><circle cx="1270.7" cy="626.7" r="3.1"/><circle cx="1275.1" cy="573.3" r="3.1"/><circle cx="1279.6" cy="573.3" r="3.1"/><circle cx="1283.8" cy="608.9" r="3.1"/></g><path d="M428.9,752.0 L433.2,752.0 L437.5,752.0 L441.8,752.0 L446.1,752.0 L450.4,752.0 L454.7,752.0 L459.0,752.0 L463.3,752.0 L467.6,752.0 L471.8,529.0 L476.1,752.0 L480.4,752.0 L484.7,752.0 L489.0,752.0 L493.3,752.0 L497.6,529.0 L501.9,752.0 L506.2,529.0 L510.5,752.0 L514.8,752.0 L519.0,752.0 L523.3,306.0 L527.7,529.0 L532.0,752.0 L536.3,752.0 L540.6,752.0 L544.9,752.0 L549.2,752.0 L553.5,752.0 L557.8,529.0 L562.0,529.0 L565.6,306.0 L570.0,752.0 L574.3,752.0 L578.7,752.0 L583.0,752.0 L587.4,752.0 L591.7,752.0 L596.1,752.0 L600.4,752.0 L604.8,752.0 L609.1,752.0 L613.5,752.0 L617.8,752.0 L622.2,529.0 L626.6,752.0 L631.0,306.0 L634.4,529.0 L638.7,752.0 L643.0,752.0 L647.3,306.0 L651.5,752.0 L655.8,752.0 L660.0,529.0 L664.2,752.0 L668.5,752.0 L672.7,306.0 L677.1,529.0 L681.4,752.0 L685.7,752.0 L690.0,752.0 L694.3,752.0 L698.6,752.0 L702.9,752.0 L707.2,752.0 L711.5,752.0 L715.8,752.0 L720.1,752.0 L724.4,529.0 L728.5,752.0 L732.7,752.0 L736.8,752.0 L741.0,752.0 L745.1,529.0 L749.4,752.0 L753.6,752.0 L757.9,752.0 L762.1,752.0 L766.4,752.0 L770.6,752.0 L774.9,752.0 L779.1,752.0 L783.4,752.0 L787.6,752.0 L791.9,752.0 L796.1,752.0 L800.4,752.0 L804.6,752.0 L808.9,529.0 L813.3,529.0 L817.8,752.0 L822.3,752.0 L826.8,752.0 L831.3,752.0 L835.9,752.0 L840.4,752.0 L844.9,752.0 L849.4,752.0 L853.9,529.0 L857.6,752.0 L861.4,529.0 L865.2,752.0 L869.0,752.0 L872.8,529.0 L877.3,752.0 L881.7,752.0 L886.2,306.0 L890.3,752.0 L894.4,529.0 L898.8,752.0 L903.3,529.0 L907.8,306.0 L911.9,529.0 L916.2,752.0 L920.5,752.0 L924.8,752.0 L929.2,752.0 L933.5,752.0 L937.8,529.0 L942.2,529.0 L946.4,752.0 L950.5,752.0 L954.7,752.0 L958.9,529.0 L963.3,529.0 L967.5,752.0 L971.7,752.0 L976.0,752.0 L980.2,752.0 L984.4,529.0 L988.7,752.0 L992.9,752.0 L997.2,752.0 L1001.4,752.0 L1005.7,752.0 L1009.9,752.0 L1014.2,752.0 L1018.4,752.0 L1022.7,529.0 L1026.9,752.0 L1031.1,529.0 L1035.4,752.0 L1039.7,752.0 L1044.0,752.0 L1048.3,752.0 L1052.7,752.0 L1057.0,752.0 L1061.3,752.0 L1065.6,529.0 L1069.8,752.0 L1074.0,752.0 L1078.3,752.0 L1082.5,752.0 L1086.7,529.0 L1091.2,752.0 L1095.6,529.0 L1099.8,752.0 L1104.0,752.0 L1108.3,752.0 L1112.5,752.0 L1116.7,529.0 L1120.9,752.0 L1125.1,752.0 L1129.3,752.0 L1133.5,752.0 L1137.6,752.0 L1141.8,752.0 L1146.0,752.0 L1150.2,752.0 L1154.4,529.0 L1159.6,529.0 L1163.9,752.0 L1168.2,752.0 L1172.4,752.0 L1176.7,529.0 L1181.1,752.0 L1185.5,752.0 L1190.0,752.0 L1194.4,752.0 L1198.8,752.0 L1203.2,752.0 L1207.7,752.0 L1212.1,752.0 L1216.5,752.0 L1220.9,752.0 L1225.4,752.0 L1229.8,752.0 L1234.2,529.0 L1238.3,752.0 L1242.4,752.0 L1246.5,752.0 L1250.6,752.0 L1254.7,752.0 L1258.7,752.0 L1262.8,752.0 L1266.9,752.0 L1271.0,752.0 L1275.1,529.0 L1279.2,752.0 L1283.3,529.0" fill="none" stroke="#f59c0c" stroke-width="2.1" stroke-linejoin="round"/><g fill="#f59c0c"><circle cx="428.9" cy="752.0" r="3.1"/><circle cx="433.2" cy="752.0" r="3.1"/><circle cx="437.5" cy="752.0" r="3.1"/><circle cx="441.8" cy="752.0" r="3.1"/><circle cx="446.1" cy="752.0" r="3.1"/><circle cx="450.4" cy="752.0" r="3.1"/><circle cx="454.7" cy="752.0" r="3.1"/><circle cx="459.0" cy="752.0" r="3.1"/><circle cx="463.3" cy="752.0" r="3.1"/><circle cx="467.6" cy="752.0" r="3.1"/><circle cx="471.8" cy="529.0" r="3.1"/><circle cx="476.1" cy="752.0" r="3.1"/><circle cx="480.4" cy="752.0" r="3.1"/><circle cx="484.7" cy="752.0" r="3.1"/><circle cx="489.0" cy="752.0" r="3.1"/><circle cx="493.3" cy="752.0" r="3.1"/><circle cx="497.6" cy="529.0" r="3.1"/><circle cx="501.9" cy="752.0" r="3.1"/><circle cx="506.2" cy="529.0" r="3.1"/><circle cx="510.5" cy="752.0" r="3.1"/><circle cx="514.8" cy="752.0" r="3.1"/><circle cx="519.0" cy="752.0" r="3.1"/><circle cx="523.3" cy="306.0" r="3.1"/><circle cx="527.7" cy="529.0" r="3.1"/><circle cx="532.0" cy="752.0" r="3.1"/><circle cx="536.3" cy="752.0" r="3.1"/><circle cx="540.6" cy="752.0" r="3.1"/><circle cx="544.9" cy="752.0" r="3.1"/><circle cx="549.2" cy="752.0" r="3.1"/><circle cx="553.5" cy="752.0" r="3.1"/><circle cx="557.8" cy="529.0" r="3.1"/><circle cx="562.0" cy="529.0" r="3.1"/><circle cx="565.6" cy="306.0" r="3.1"/><circle cx="570.0" cy="752.0" r="3.1"/><circle cx="574.3" cy="752.0" r="3.1"/><circle cx="578.7" cy="752.0" r="3.1"/><circle cx="583.0" cy="752.0" r="3.1"/><circle cx="587.4" cy="752.0" r="3.1"/><circle cx="591.7" cy="752.0" r="3.1"/><circle cx="596.1" cy="752.0" r="3.1"/><circle cx="600.4" cy="752.0" r="3.1"/><circle cx="604.8" cy="752.0" r="3.1"/><circle cx="609.1" cy="752.0" r="3.1"/><circle cx="613.5" cy="752.0" r="3.1"/><circle cx="617.8" cy="752.0" r="3.1"/><circle cx="622.2" cy="529.0" r="3.1"/><circle cx="626.6" cy="752.0" r="3.1"/><circle cx="631.0" cy="306.0" r="3.1"/><circle cx="634.4" cy="529.0" r="3.1"/><circle cx="638.7" cy="752.0" r="3.1"/><circle cx="643.0" cy="752.0" r="3.1"/><circle cx="647.3" cy="306.0" r="3.1"/><circle cx="651.5" cy="752.0" r="3.1"/><circle cx="655.8" cy="752.0" r="3.1"/><circle cx="660.0" cy="529.0" r="3.1"/><circle cx="664.2" cy="752.0" r="3.1"/><circle cx="668.5" cy="752.0" r="3.1"/><circle cx="672.7" cy="306.0" r="3.1"/><circle cx="677.1" cy="529.0" r="3.1"/><circle cx="681.4" cy="752.0" r="3.1"/><circle cx="685.7" cy="752.0" r="3.1"/><circle cx="690.0" cy="752.0" r="3.1"/><circle cx="694.3" cy="752.0" r="3.1"/><circle cx="698.6" cy="752.0" r="3.1"/><circle cx="702.9" cy="752.0" r="3.1"/><circle cx="707.2" cy="752.0" r="3.1"/><circle cx="711.5" cy="752.0" r="3.1"/><circle cx="715.8" cy="752.0" r="3.1"/><circle cx="720.1" cy="752.0" r="3.1"/><circle cx="724.4" cy="529.0" r="3.1"/><circle cx="728.5" cy="752.0" r="3.1"/><circle cx="732.7" cy="752.0" r="3.1"/><circle cx="736.8" cy="752.0" r="3.1"/><circle cx="741.0" cy="752.0" r="3.1"/><circle cx="745.1" cy="529.0" r="3.1"/><circle cx="749.4" cy="752.0" r="3.1"/><circle cx="753.6" cy="752.0" r="3.1"/><circle cx="757.9" cy="752.0" r="3.1"/><circle cx="762.1" cy="752.0" r="3.1"/><circle cx="766.4" cy="752.0" r="3.1"/><circle cx="770.6" cy="752.0" r="3.1"/><circle cx="774.9" cy="752.0" r="3.1"/><circle cx="779.1" cy="752.0" r="3.1"/><circle cx="783.4" cy="752.0" r="3.1"/><circle cx="787.6" cy="752.0" r="3.1"/><circle cx="791.9" cy="752.0" r="3.1"/><circle cx="796.1" cy="752.0" r="3.1"/><circle cx="800.4" cy="752.0" r="3.1"/><circle cx="804.6" cy="752.0" r="3.1"/><circle cx="808.9" cy="529.0" r="3.1"/><circle cx="813.3" cy="529.0" r="3.1"/><circle cx="817.8" cy="752.0" r="3.1"/><circle cx="822.3" cy="752.0" r="3.1"/><circle cx="826.8" cy="752.0" r="3.1"/><circle cx="831.3" cy="752.0" r="3.1"/><circle cx="835.9" cy="752.0" r="3.1"/><circle cx="840.4" cy="752.0" r="3.1"/><circle cx="844.9" cy="752.0" r="3.1"/><circle cx="849.4" cy="752.0" r="3.1"/><circle cx="853.9" cy="529.0" r="3.1"/><circle cx="857.6" cy="752.0" r="3.1"/><circle cx="861.4" cy="529.0" r="3.1"/><circle cx="865.2" cy="752.0" r="3.1"/><circle cx="869.0" cy="752.0" r="3.1"/><circle cx="872.8" cy="529.0" r="3.1"/><circle cx="877.3" cy="752.0" r="3.1"/><circle cx="881.7" cy="752.0" r="3.1"/><circle cx="886.2" cy="306.0" r="3.1"/><circle cx="890.3" cy="752.0" r="3.1"/><circle cx="894.4" cy="529.0" r="3.1"/><circle cx="898.8" cy="752.0" r="3.1"/><circle cx="903.3" cy="529.0" r="3.1"/><circle cx="907.8" cy="306.0" r="3.1"/><circle cx="911.9" cy="529.0" r="3.1"/><circle cx="916.2" cy="752.0" r="3.1"/><circle cx="920.5" cy="752.0" r="3.1"/><circle cx="924.8" cy="752.0" r="3.1"/><circle cx="929.2" cy="752.0" r="3.1"/><circle cx="933.5" cy="752.0" r="3.1"/><circle cx="937.8" cy="529.0" r="3.1"/><circle cx="942.2" cy="529.0" r="3.1"/><circle cx="946.4" cy="752.0" r="3.1"/><circle cx="950.5" cy="752.0" r="3.1"/><circle cx="954.7" cy="752.0" r="3.1"/><circle cx="958.9" cy="529.0" r="3.1"/><circle cx="963.3" cy="529.0" r="3.1"/><circle cx="967.5" cy="752.0" r="3.1"/><circle cx="971.7" cy="752.0" r="3.1"/><circle cx="976.0" cy="752.0" r="3.1"/><circle cx="980.2" cy="752.0" r="3.1"/><circle cx="984.4" cy="529.0" r="3.1"/><circle cx="988.7" cy="752.0" r="3.1"/><circle cx="992.9" cy="752.0" r="3.1"/><circle cx="997.2" cy="752.0" r="3.1"/><circle cx="1001.4" cy="752.0" r="3.1"/><circle cx="1005.7" cy="752.0" r="3.1"/><circle cx="1009.9" cy="752.0" r="3.1"/><circle cx="1014.2" cy="752.0" r="3.1"/><circle cx="1018.4" cy="752.0" r="3.1"/><circle cx="1022.7" cy="529.0" r="3.1"/><circle cx="1026.9" cy="752.0" r="3.1"/><circle cx="1031.1" cy="529.0" r="3.1"/><circle cx="1035.4" cy="752.0" r="3.1"/><circle cx="1039.7" cy="752.0" r="3.1"/><circle cx="1044.0" cy="752.0" r="3.1"/><circle cx="1048.3" cy="752.0" r="3.1"/><circle cx="1052.7" cy="752.0" r="3.1"/><circle cx="1057.0" cy="752.0" r="3.1"/><circle cx="1061.3" cy="752.0" r="3.1"/><circle cx="1065.6" cy="529.0" r="3.1"/><circle cx="1069.8" cy="752.0" r="3.1"/><circle cx="1074.0" cy="752.0" r="3.1"/><circle cx="1078.3" cy="752.0" r="3.1"/><circle cx="1082.5" cy="752.0" r="3.1"/><circle cx="1086.7" cy="529.0" r="3.1"/><circle cx="1091.2" cy="752.0" r="3.1"/><circle cx="1095.6" cy="529.0" r="3.1"/><circle cx="1099.8" cy="752.0" r="3.1"/><circle cx="1104.0" cy="752.0" r="3.1"/><circle cx="1108.3" cy="752.0" r="3.1"/><circle cx="1112.5" cy="752.0" r="3.1"/><circle cx="1116.7" cy="529.0" r="3.1"/><circle cx="1120.9" cy="752.0" r="3.1"/><circle cx="1125.1" cy="752.0" r="3.1"/><circle cx="1129.3" cy="752.0" r="3.1"/><circle cx="1133.5" cy="752.0" r="3.1"/><circle cx="1137.6" cy="752.0" r="3.1"/><circle cx="1141.8" cy="752.0" r="3.1"/><circle cx="1146.0" cy="752.0" r="3.1"/><circle cx="1150.2" cy="752.0" r="3.1"/><circle cx="1154.4" cy="529.0" r="3.1"/><circle cx="1159.6" cy="529.0" r="3.1"/><circle cx="1163.9" cy="752.0" r="3.1"/><circle cx="1168.2" cy="752.0" r="3.1"/><circle cx="1172.4" cy="752.0" r="3.1"/><circle cx="1176.7" cy="529.0" r="3.1"/><circle cx="1181.1" cy="752.0" r="3.1"/><circle cx="1185.5" cy="752.0" r="3.1"/><circle cx="1190.0" cy="752.0" r="3.1"/><circle cx="1194.4" cy="752.0" r="3.1"/><circle cx="1198.8" cy="752.0" r="3.1"/><circle cx="1203.2" cy="752.0" r="3.1"/><circle cx="1207.7" cy="752.0" r="3.1"/><circle cx="1212.1" cy="752.0" r="3.1"/><circle cx="1216.5" cy="752.0" r="3.1"/><circle cx="1220.9" cy="752.0" r="3.1"/><circle cx="1225.4" cy="752.0" r="3.1"/><circle cx="1229.8" cy="752.0" r="3.1"/><circle cx="1234.2" cy="529.0" r="3.1"/><circle cx="1238.3" cy="752.0" r="3.1"/><circle cx="1242.4" cy="752.0" r="3.1"/><circle cx="1246.5" cy="752.0" r="3.1"/><circle cx="1250.6" cy="752.0" r="3.1"/><circle cx="1254.7" cy="752.0" r="3.1"/><circle cx="1258.7" cy="752.0" r="3.1"/><circle cx="1262.8" cy="752.0" r="3.1"/><circle cx="1266.9" cy="752.0" r="3.1"/><circle cx="1271.0" cy="752.0" r="3.1"/><circle cx="1275.1" cy="529.0" r="3.1"/><circle cx="1279.2" cy="752.0" r="3.1"/><circle cx="1283.3" cy="529.0" r="3.1"/></g><path d="M428.9,475.6 L433.2,450.7 L437.5,400.7 L441.8,450.7 L446.1,475.6 L450.4,376.0 L454.7,426.0 L459.0,501.0 L463.3,551.0 L467.6,601.0 L471.8,551.0 L476.1,576.0 L480.4,501.0 L484.7,475.6 L489.0,426.0 L493.3,450.7 L497.6,426.0 L501.9,400.7 L506.2,426.0 L510.5,501.0 L514.8,475.6 L519.1,501.0 L523.4,551.0 L527.7,551.0 L532.0,501.0 L536.3,475.6 L540.6,475.6 L544.9,501.0 L549.2,576.0 L553.5,576.0 L557.8,551.0 L562.0,526.0 L566.3,501.0 L570.6,551.0 L574.9,526.0 L579.2,601.0 L583.5,576.0 L587.8,651.0 L592.1,576.0 L596.4,526.0 L600.7,475.6 L605.0,475.6 L609.3,551.0 L613.6,576.0 L617.9,526.0 L622.2,601.0 L626.5,601.0 L630.9,651.1 L634.8,676.1 L638.9,676.7 L642.2,726.7 L646.7,726.7 L651.1,651.1 L655.6,576.0 L660.0,576.0 L664.4,576.0 L668.9,526.0 L672.7,501.1 L676.7,475.6 L681.1,475.6 L685.6,576.0 L689.6,576.0 L694.0,501.1 L698.4,526.0 L702.4,526.0 L706.7,526.0 L711.1,576.0 L715.6,601.1 L720.0,676.7 L723.8,701.8 L727.8,626.7 L732.2,676.7 L736.7,701.8 L741.1,676.7 L745.6,576.7 L750.0,551.1 L754.0,626.7 L758.2,651.1 L762.4,626.7 L766.7,576.7 L771.1,526.2 L775.6,526.2 L780.0,601.8 L784.0,576.7 L787.8,526.2 L792.2,450.7 L796.7,400.7 L800.7,450.7 L805.6,400.7 L809.6,426.0 L813.3,476.0 L817.8,476.0 L822.2,501.1 L826.7,476.0 L830.7,426.0 L834.4,476.0 L838.9,476.0 L843.3,501.1 L847.8,551.1 L851.1,526.0 L854.4,526.0 L857.8,526.0 L860.4,601.8 L864.9,651.1 L868.9,676.7 L873.3,601.8 L877.8,526.0 L882.2,426.0 L886.2,450.7 L890.7,501.1 L894.4,526.0 L898.9,576.7 L903.3,601.8 L907.8,551.1 L912.2,601.8 L916.7,676.7 L921.1,676.7 L924.9,601.8 L928.9,651.1 L933.3,676.7 L937.8,626.7 L941.8,676.7 L946.2,726.7 L950.4,701.8 L954.9,752.2 L958.9,726.7 L963.3,676.7 L967.3,701.8 L972.4,752.2 L976.7,752.2 L980.4,726.7 L984.4,676.7 L988.9,752.2 L993.3,752.2 L997.3,752.2 L1001.8,726.7 L1006.2,701.8 L1010.7,752.2 L1015.1,752.2 L1018.9,726.7 L1022.7,626.7 L1027.1,676.7 L1031.6,701.8 L1035.6,701.8 L1040.0,726.7 L1044.4,752.2 L1049.4,726.7 L1052.8,676.7 L1057.2,701.8 L1061.1,752.2 L1065.6,726.7 L1070.0,676.7 L1074.4,676.7 L1078.4,701.8 L1082.7,752.2 L1087.1,726.7 L1091.1,701.8 L1095.6,651.1 L1100.0,651.1 L1104.0,726.7 L1108.4,752.2 L1112.9,726.7 L1117.1,726.7 L1121.1,752.2 L1125.6,726.7 L1130.0,651.1 L1134.0,701.8 L1138.9,752.2 L1143.3,752.2 L1147.8,752.2 L1151.8,752.2 L1155.6,726.7 L1160.0,726.7 L1163.8,752.2 L1168.2,752.2 L1172.2,676.7 L1176.7,626.7 L1181.1,576.7 L1185.6,551.1 L1189.6,576.7 L1194.0,676.7 L1198.2,626.7 L1202.7,626.7 L1206.7,601.8 L1210.7,576.7 L1215.1,576.7 L1219.3,576.7 L1223.8,501.1 L1227.8,501.1 L1232.2,551.1 L1236.7,476.0 L1240.7,400.7 L1245.1,426.0 L1249.6,400.7 L1253.8,351.1 L1257.8,306.0 L1262.2,331.1 L1266.7,331.1 L1270.7,406.2 L1275.1,331.1 L1279.6,306.0 L1283.8,331.1" fill="none" stroke="#1ea7e6" stroke-width="2.1" stroke-linejoin="round"/><g fill="#1ea7e6"><circle cx="428.9" cy="475.6" r="3.1"/><circle cx="433.2" cy="450.7" r="3.1"/><circle cx="437.5" cy="400.7" r="3.1"/><circle cx="441.8" cy="450.7" r="3.1"/><circle cx="446.1" cy="475.6" r="3.1"/><circle cx="450.4" cy="376.0" r="3.1"/><circle cx="454.7" cy="426.0" r="3.1"/><circle cx="459.0" cy="501.0" r="3.1"/><circle cx="463.3" cy="551.0" r="3.1"/><circle cx="467.6" cy="601.0" r="3.1"/><circle cx="471.8" cy="551.0" r="3.1"/><circle cx="476.1" cy="576.0" r="3.1"/><circle cx="480.4" cy="501.0" r="3.1"/><circle cx="484.7" cy="475.6" r="3.1"/><circle cx="489.0" cy="426.0" r="3.1"/><circle cx="493.3" cy="450.7" r="3.1"/><circle cx="497.6" cy="426.0" r="3.1"/><circle cx="501.9" cy="400.7" r="3.1"/><circle cx="506.2" cy="426.0" r="3.1"/><circle cx="510.5" cy="501.0" r="3.1"/><circle cx="514.8" cy="475.6" r="3.1"/><circle cx="519.1" cy="501.0" r="3.1"/><circle cx="523.4" cy="551.0" r="3.1"/><circle cx="527.7" cy="551.0" r="3.1"/><circle cx="532.0" cy="501.0" r="3.1"/><circle cx="536.3" cy="475.6" r="3.1"/><circle cx="540.6" cy="475.6" r="3.1"/><circle cx="544.9" cy="501.0" r="3.1"/><circle cx="549.2" cy="576.0" r="3.1"/><circle cx="553.5" cy="576.0" r="3.1"/><circle cx="557.8" cy="551.0" r="3.1"/><circle cx="562.0" cy="526.0" r="3.1"/><circle cx="566.3" cy="501.0" r="3.1"/><circle cx="570.6" cy="551.0" r="3.1"/><circle cx="574.9" cy="526.0" r="3.1"/><circle cx="579.2" cy="601.0" r="3.1"/><circle cx="583.5" cy="576.0" r="3.1"/><circle cx="587.8" cy="651.0" r="3.1"/><circle cx="592.1" cy="576.0" r="3.1"/><circle cx="596.4" cy="526.0" r="3.1"/><circle cx="600.7" cy="475.6" r="3.1"/><circle cx="605.0" cy="475.6" r="3.1"/><circle cx="609.3" cy="551.0" r="3.1"/><circle cx="613.6" cy="576.0" r="3.1"/><circle cx="617.9" cy="526.0" r="3.1"/><circle cx="622.2" cy="601.0" r="3.1"/><circle cx="626.5" cy="601.0" r="3.1"/><circle cx="630.9" cy="651.1" r="3.1"/><circle cx="634.8" cy="676.1" r="3.1"/><circle cx="638.9" cy="676.7" r="3.1"/><circle cx="642.2" cy="726.7" r="3.1"/><circle cx="646.7" cy="726.7" r="3.1"/><circle cx="651.1" cy="651.1" r="3.1"/><circle cx="655.6" cy="576.0" r="3.1"/><circle cx="660.0" cy="576.0" r="3.1"/><circle cx="664.4" cy="576.0" r="3.1"/><circle cx="668.9" cy="526.0" r="3.1"/><circle cx="672.7" cy="501.1" r="3.1"/><circle cx="676.7" cy="475.6" r="3.1"/><circle cx="681.1" cy="475.6" r="3.1"/><circle cx="685.6" cy="576.0" r="3.1"/><circle cx="689.6" cy="576.0" r="3.1"/><circle cx="694.0" cy="501.1" r="3.1"/><circle cx="698.4" cy="526.0" r="3.1"/><circle cx="702.4" cy="526.0" r="3.1"/><circle cx="706.7" cy="526.0" r="3.1"/><circle cx="711.1" cy="576.0" r="3.1"/><circle cx="715.6" cy="601.1" r="3.1"/><circle cx="720.0" cy="676.7" r="3.1"/><circle cx="723.8" cy="701.8" r="3.1"/><circle cx="727.8" cy="626.7" r="3.1"/><circle cx="732.2" cy="676.7" r="3.1"/><circle cx="736.7" cy="701.8" r="3.1"/><circle cx="741.1" cy="676.7" r="3.1"/><circle cx="745.6" cy="576.7" r="3.1"/><circle cx="750.0" cy="551.1" r="3.1"/><circle cx="754.0" cy="626.7" r="3.1"/><circle cx="758.2" cy="651.1" r="3.1"/><circle cx="762.4" cy="626.7" r="3.1"/><circle cx="766.7" cy="576.7" r="3.1"/><circle cx="771.1" cy="526.2" r="3.1"/><circle cx="775.6" cy="526.2" r="3.1"/><circle cx="780.0" cy="601.8" r="3.1"/><circle cx="784.0" cy="576.7" r="3.1"/><circle cx="787.8" cy="526.2" r="3.1"/><circle cx="792.2" cy="450.7" r="3.1"/><circle cx="796.7" cy="400.7" r="3.1"/><circle cx="800.7" cy="450.7" r="3.1"/><circle cx="805.6" cy="400.7" r="3.1"/><circle cx="809.6" cy="426.0" r="3.1"/><circle cx="813.3" cy="476.0" r="3.1"/><circle cx="817.8" cy="476.0" r="3.1"/><circle cx="822.2" cy="501.1" r="3.1"/><circle cx="826.7" cy="476.0" r="3.1"/><circle cx="830.7" cy="426.0" r="3.1"/><circle cx="834.4" cy="476.0" r="3.1"/><circle cx="838.9" cy="476.0" r="3.1"/><circle cx="843.3" cy="501.1" r="3.1"/><circle cx="847.8" cy="551.1" r="3.1"/><circle cx="851.1" cy="526.0" r="3.1"/><circle cx="854.4" cy="526.0" r="3.1"/><circle cx="857.8" cy="526.0" r="3.1"/><circle cx="860.4" cy="601.8" r="3.1"/><circle cx="864.9" cy="651.1" r="3.1"/><circle cx="868.9" cy="676.7" r="3.1"/><circle cx="873.3" cy="601.8" r="3.1"/><circle cx="877.8" cy="526.0" r="3.1"/><circle cx="882.2" cy="426.0" r="3.1"/><circle cx="886.2" cy="450.7" r="3.1"/><circle cx="890.7" cy="501.1" r="3.1"/><circle cx="894.4" cy="526.0" r="3.1"/><circle cx="898.9" cy="576.7" r="3.1"/><circle cx="903.3" cy="601.8" r="3.1"/><circle cx="907.8" cy="551.1" r="3.1"/><circle cx="912.2" cy="601.8" r="3.1"/><circle cx="916.7" cy="676.7" r="3.1"/><circle cx="921.1" cy="676.7" r="3.1"/><circle cx="924.9" cy="601.8" r="3.1"/><circle cx="928.9" cy="651.1" r="3.1"/><circle cx="933.3" cy="676.7" r="3.1"/><circle cx="937.8" cy="626.7" r="3.1"/><circle cx="941.8" cy="676.7" r="3.1"/><circle cx="946.2" cy="726.7" r="3.1"/><circle cx="950.4" cy="701.8" r="3.1"/><circle cx="954.9" cy="752.2" r="3.1"/><circle cx="958.9" cy="726.7" r="3.1"/><circle cx="963.3" cy="676.7" r="3.1"/><circle cx="967.3" cy="701.8" r="3.1"/><circle cx="972.4" cy="752.2" r="3.1"/><circle cx="976.7" cy="752.2" r="3.1"/><circle cx="980.4" cy="726.7" r="3.1"/><circle cx="984.4" cy="676.7" r="3.1"/><circle cx="988.9" cy="752.2" r="3.1"/><circle cx="993.3" cy="752.2" r="3.1"/><circle cx="997.3" cy="752.2" r="3.1"/><circle cx="1001.8" cy="726.7" r="3.1"/><circle cx="1006.2" cy="701.8" r="3.1"/><circle cx="1010.7" cy="752.2" r="3.1"/><circle cx="1015.1" cy="752.2" r="3.1"/><circle cx="1018.9" cy="726.7" r="3.1"/><circle cx="1022.7" cy="626.7" r="3.1"/><circle cx="1027.1" cy="676.7" r="3.1"/><circle cx="1031.6" cy="701.8" r="3.1"/><circle cx="1035.6" cy="701.8" r="3.1"/><circle cx="1040.0" cy="726.7" r="3.1"/><circle cx="1044.4" cy="752.2" r="3.1"/><circle cx="1049.4" cy="726.7" r="3.1"/><circle cx="1052.8" cy="676.7" r="3.1"/><circle cx="1057.2" cy="701.8" r="3.1"/><circle cx="1061.1" cy="752.2" r="3.1"/><circle cx="1065.6" cy="726.7" r="3.1"/><circle cx="1070.0" cy="676.7" r="3.1"/><circle cx="1074.4" cy="676.7" r="3.1"/><circle cx="1078.4" cy="701.8" r="3.1"/><circle cx="1082.7" cy="752.2" r="3.1"/><circle cx="1087.1" cy="726.7" r="3.1"/><circle cx="1091.1" cy="701.8" r="3.1"/><circle cx="1095.6" cy="651.1" r="3.1"/><circle cx="1100.0" cy="651.1" r="3.1"/><circle cx="1104.0" cy="726.7" r="3.1"/><circle cx="1108.4" cy="752.2" r="3.1"/><circle cx="1112.9" cy="726.7" r="3.1"/><circle cx="1117.1" cy="726.7" r="3.1"/><circle cx="1121.1" cy="752.2" r="3.1"/><circle cx="1125.6" cy="726.7" r="3.1"/><circle cx="1130.0" cy="651.1" r="3.1"/><circle cx="1134.0" cy="701.8" r="3.1"/><circle cx="1138.9" cy="752.2" r="3.1"/><circle cx="1143.3" cy="752.2" r="3.1"/><circle cx="1147.8" cy="752.2" r="3.1"/><circle cx="1151.8" cy="752.2" r="3.1"/><circle cx="1155.6" cy="726.7" r="3.1"/><circle cx="1160.0" cy="726.7" r="3.1"/><circle cx="1163.8" cy="752.2" r="3.1"/><circle cx="1168.2" cy="752.2" r="3.1"/><circle cx="1172.2" cy="676.7" r="3.1"/><circle cx="1176.7" cy="626.7" r="3.1"/><circle cx="1181.1" cy="576.7" r="3.1"/><circle cx="1185.6" cy="551.1" r="3.1"/><circle cx="1189.6" cy="576.7" r="3.1"/><circle cx="1194.0" cy="676.7" r="3.1"/><circle cx="1198.2" cy="626.7" r="3.1"/><circle cx="1202.7" cy="626.7" r="3.1"/><circle cx="1206.7" cy="601.8" r="3.1"/><circle cx="1210.7" cy="576.7" r="3.1"/><circle cx="1215.1" cy="576.7" r="3.1"/><circle cx="1219.3" cy="576.7" r="3.1"/><circle cx="1223.8" cy="501.1" r="3.1"/><circle cx="1227.8" cy="501.1" r="3.1"/><circle cx="1232.2" cy="551.1" r="3.1"/><circle cx="1236.7" cy="476.0" r="3.1"/><circle cx="1240.7" cy="400.7" r="3.1"/><circle cx="1245.1" cy="426.0" r="3.1"/><circle cx="1249.6" cy="400.7" r="3.1"/><circle cx="1253.8" cy="351.1" r="3.1"/><circle cx="1257.8" cy="306.0" r="3.1"/><circle cx="1262.2" cy="331.1" r="3.1"/><circle cx="1266.7" cy="331.1" r="3.1"/><circle cx="1270.7" cy="406.2" r="3.1"/><circle cx="1275.1" cy="331.1" r="3.1"/><circle cx="1279.6" cy="306.0" r="3.1"/><circle cx="1283.8" cy="331.1" r="3.1"/></g></svg>
<svg style="position:absolute;left:383px;top:866px;" width="34" height="14" viewBox="0 0 34 14"><rect x="0" y="6" width="34" height="2" fill="#e0246a"/><circle cx="17" cy="7" r="3.4" fill="#e0246a"/></svg>
<div class="t" style="left:423.1px;top:867.20px;font-size:14px;line-height:14px;color:#333;font-weight:400;letter-spacing:0.55px;">Actual line speed</div>
<svg style="position:absolute;left:549.7px;top:866px;" width="34" height="14" viewBox="0 0 34 14"><rect x="0" y="6" width="34" height="2" fill="#f59c0c"/><circle cx="17" cy="7" r="3.4" fill="#f59c0c"/></svg>
<div class="t" style="left:589.6px;top:867.20px;font-size:14px;line-height:14px;color:#333;font-weight:400;letter-spacing:0.453px;">Line speed set point</div>
<svg style="position:absolute;left:734px;top:866px;" width="34" height="14" viewBox="0 0 34 14"><rect x="0" y="6" width="34" height="2" fill="#1ea7e6"/><circle cx="17" cy="7" r="3.4" fill="#1ea7e6"/></svg>
<div class="t" style="left:773.2px;top:867.20px;font-size:14px;line-height:14px;color:#333;font-weight:400;letter-spacing:0.659px;">Filler temperature</div>
<div style="position:absolute;left:270px;top:960px;width:1650px;height:120px;background:linear-gradient(90deg,#e6e6f2 0%,#e8e8f2 27%,#e8e8ed 75%,#e6e7ea 100%);border-radius:20px;"></div>
<div style="position:absolute;left:282px;top:960px;width:1618px;height:101px;background:#fcfcfd;border-radius:20px 0 0 20px;"></div>
<div style="position:absolute;left:300px;top:959.5px;width:1600px;height:1px;background:rgba(0,0,0,0.06);border-radius:0;"></div>
<div style="position:absolute;left:288px;top:979px;width:1614px;height:82px;background:#fff;border-radius:0;"></div>
<div style="position:absolute;left:288px;top:1020px;width:1614px;height:1px;background:#e6e6ea;border-radius:0;"></div>
<div class="t" style="left:429.9px;top:990.70px;font-size:16px;line-height:16px;color:#8a8a8a;font-weight:700;letter-spacing:0.629px;-webkit-text-stroke:0.3px #8a8a8a">Cycle Id</div>
<div class="t" style="left:588.5px;top:990.70px;font-size:16px;line-height:16px;color:#8a8a8a;font-weight:700;letter-spacing:0.5px;-webkit-text-stroke:0.3px #8a8a8a">Day</div>
<div class="t" style="left:795.8px;top:990.70px;font-size:16px;line-height:16px;color:#8a8a8a;font-weight:700;letter-spacing:0.65px;-webkit-text-stroke:0.3px #8a8a8a">Cycle start</div>
<div class="t" style="left:1000.8px;top:990.70px;font-size:16px;line-height:16px;color:#8a8a8a;font-weight:700;letter-spacing:0.65px;-webkit-text-stroke:0.3px #8a8a8a">Cycle end</div>
<div class="t" style="left:1190.0px;top:990.70px;font-size:16px;line-height:16px;color:#8a8a8a;font-weight:700;letter-spacing:0.715px;-webkit-text-stroke:0.3px #8a8a8a">Cycle duration</div>
<div class="t" style="left:1455.6px;top:990.70px;font-size:16px;line-height:16px;color:#8a8a8a;font-weight:700;letter-spacing:1.214px;-webkit-text-stroke:0.3px #8a8a8a">Material</div>
<div class="t" style="left:1621.5px;top:990.70px;font-size:16px;line-height:16px;color:#8a8a8a;font-weight:700;letter-spacing:0.45px;-webkit-text-stroke:0.3px #8a8a8a">Production code</div>
<div class="t" style="left:297.5px;top:1033.00px;font-size:16px;line-height:16px;color:#444;font-weight:400;letter-spacing:1.04px;">Actual</div>
<div class="t" style="left:429.9px;top:1033.00px;font-size:16px;line-height:16px;color:#444;font-weight:400;letter-spacing:1.2px;">9535</div>
<div class="t" style="left:588.5px;top:1033.00px;font-size:16px;line-height:16px;color:#444;font-weight:400;letter-spacing:1.167px;">2023-04-<span style="margin-left:-0.8px;margin-right:-1.92px">1</span>0</div>
<div class="t" style="left:795.8px;top:1033.00px;font-size:16px;line-height:16px;color:#444;font-weight:400;letter-spacing:0.214px;">20:33:50</div>
<div class="t" style="left:1000.8px;top:1033.00px;font-size:16px;line-height:16px;color:#444;font-weight:400;letter-spacing:-0.071px;">2<span style="margin-left:-0.8px;margin-right:-1.92px">1</span>:33:40</div>
<div class="t" style="left:1190.0px;top:1033.00px;font-size:16px;line-height:16px;color:#444;font-weight:400;letter-spacing:0.571px;">00:59:50</div>
<div class="t" style="left:1455.6px;top:1033.00px;font-size:16px;line-height:16px;color:#444;font-weight:400;letter-spacing:-1.033px;">MAT<span style="margin-left:-0.8px;margin-right:-1.92px">1</span></div>
<div class="t" style="left:1621.5px;top:1033.00px;font-size:16px;line-height:16px;color:#444;font-weight:400;letter-spacing:0.32px;"><span style="margin-left:-0.8px;margin-right:-1.92px">1</span>76406</div>
<div style="position:absolute;left:261.6px;top:994.5px;width:32px;height:32px;background:#5467f4;border-radius:50%;"></div>
<svg style="position:absolute;left:269.5px;top:1002.5px;" width="16" height="16" viewBox="0 0 16 16"><path d="M10,3.5 L5.5,8 L10,12.5" fill="none" stroke="#fff" stroke-width="2"/></svg>
</body></html>
